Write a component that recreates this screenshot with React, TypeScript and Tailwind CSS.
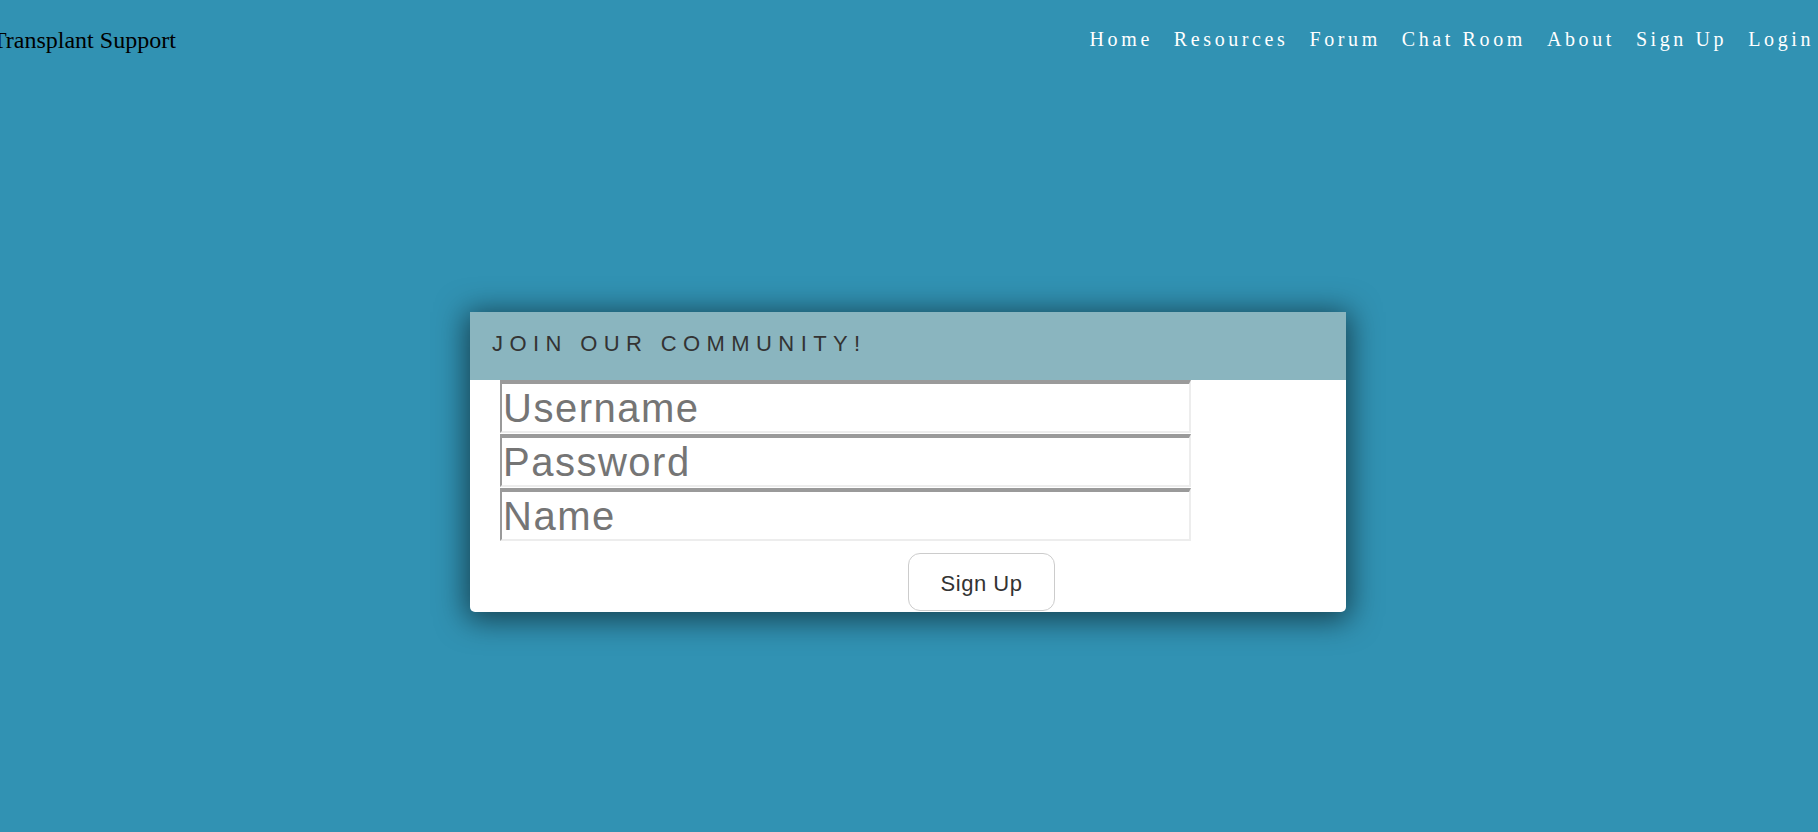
import React from "react";

const navItems = ["Home", "Resources", "Forum", "Chat Room", "About", "Sign Up", "Login"];

export default function App() {
  return (
    <div className="w-full h-[832px] bg-[#3192b3] overflow-hidden">
      <header className="flex justify-between items-start h-[75px]">
        <div className="ml-[-8px] mt-[28px] text-[24px] leading-[24px] text-black font-['Liberation_Serif',serif] whitespace-nowrap">
          Transplant Support
        </div>
        <nav className="flex gap-[21px] mt-[29px] pr-[4px] font-['Liberation_Serif',serif] text-[20px] leading-[20px] tracking-[3.6px] text-white whitespace-nowrap">
          {navItems.map((n) => (
            <a key={n} className="cursor-pointer">
              {n}
            </a>
          ))}
        </nav>
      </header>

      <div className="flex justify-center pr-[2px] mt-[237px]">
        <div className="w-[876px] bg-white rounded-b-[5px] shadow-[0_4px_30px_4px_rgba(0,0,0,0.55)] font-['Liberation_Sans',Arial,sans-serif]">
          <div className="h-[68px] bg-[#8ab5bf] pt-[21px] pl-[22px] text-[22px] leading-[22px] tracking-[6.4px] text-[#333]">
            JOIN OUR COMMUNITY!
          </div>
          <div className="pl-[30px] pb-[1px]">
            <div className="flex flex-col gap-[1px] w-[691px]">
              {["Username", "Password", "Name"].map((p) => (
                <input
                  key={p}
                  type={p === "Password" ? "password" : "text"}
                  placeholder={p}
                  className="h-[53px] w-full border-2 border-t-[4px] border-t-[#9a9a9a] border-l-[#9a9a9a] border-b-[#ededed] border-r-[#ededed] px-[1px] py-0 text-[40px] tracking-[1.5px] text-[#333] placeholder:text-[#757575] outline-none bg-white font-['Liberation_Sans',Arial,sans-serif]"
                />
              ))}
            </div>
            <button className="mt-[12px] ml-[408px] w-[147px] h-[58px] pt-[2px] bg-white border-[1.5px] border-[#ccc] rounded-[12px] text-[22px] tracking-[0.5px] text-[#333] font-['Liberation_Sans',Arial,sans-serif]">
              Sign Up
            </button>
          </div>
        </div>
      </div>
    </div>
  );
}
